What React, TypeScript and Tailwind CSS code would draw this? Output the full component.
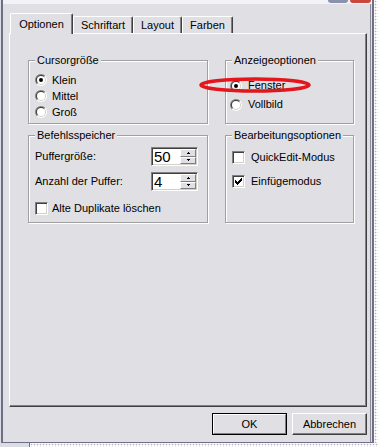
import React from "react";

const checker =
  "bg-white bg-[radial-gradient(circle,#b4b4c0_0.7px,#ffffff_1.1px)] bg-[length:3px_3px]";

function Radio({ checked }: { checked?: boolean }) {
  // classic sunken radio: split diagonally into shadow / highlight halves
  const half = (r: number, sweep: 0 | 1, fill: string) => {
    const d = r * Math.SQRT1_2;
    return (
      <path
        d={`M${6 + d} ${6 - d}A${r} ${r} 0 0 ${sweep} ${6 - d} ${6 + d}Z`}
        fill={fill}
      />
    );
  };
  return (
    <svg width="12" height="12" viewBox="0 0 12 12" className="shrink-0">
      {half(6, 0, "#808080")}
      {half(6, 1, "#ffffff")}
      {half(5, 0, "#404040")}
      {half(5, 1, "#d4d0c8")}
      <circle cx="6" cy="6" r="4" fill="#fff" />
      {checked && <circle cx="6" cy="6" r="2" fill="#000" />}
    </svg>
  );
}

function CheckBox({ checked }: { checked?: boolean }) {
  const ys = [2, 3, 4, 3, 2, 1, 0];
  return (
    <div className="w-[13px] h-[13px] shrink-0 bg-white border border-t-[#808080] border-l-[#808080] border-r-white border-b-white shadow-[inset_1px_1px_0_#404040,inset_-1px_-1px_0_#d4d0c8]">
      {checked && (
        <svg
          width="7"
          height="7"
          viewBox="0 0 7 7"
          shapeRendering="crispEdges"
          className="block ml-[2px] mt-[2px]"
        >
          {ys.map((y, x) => (
            <rect key={x} x={x} y={y} width={1} height={3} fill="#000" />
          ))}
        </svg>
      )}
    </div>
  );
}

function Arrow({ up }: { up?: boolean }) {
  const rows = up
    ? [
        [2, 1],
        [1, 3],
      ]
    : [
        [1, 3],
        [2, 1],
      ];
  return (
    <svg width="5" height="2" viewBox="0 0 5 2" shapeRendering="crispEdges">
      {rows.map(([x, w], y) => (
        <rect key={y} x={x} y={y} width={w} height={1} fill="#000" />
      ))}
    </svg>
  );
}

function SpinBtn({ up }: { up?: boolean }) {
  return (
    <div className="flex-1 flex items-center justify-center bg-[#e0dfe3] border border-t-white border-l-white border-r-[#808080] border-b-[#808080]">
      <Arrow up={up} />
    </div>
  );
}

function Spin({ value }: { value: string }) {
  return (
    <div className="flex w-[47px] h-[19px] p-px bg-white border border-t-[#808080] border-l-[#808080] border-r-white border-b-white shadow-[inset_1px_1px_0_#404040,inset_-1px_-1px_0_#d4d0c8]">
      <span className="flex-1 pl-px text-[15px] leading-[15px]">{value}</span>
      <div className="flex flex-col w-[16px]">
        <SpinBtn up />
        <SpinBtn />
      </div>
    </div>
  );
}

function Group({
  title,
  children,
}: {
  title: string;
  children?: React.ReactNode;
}) {
  return (
    <fieldset className="min-w-0 border border-[#a0a0a0] shadow-[1px_1px_0_#fff,inset_1px_1px_0_#fff]">
      <legend className="ml-[6px] px-[2px] leading-[13px] bg-[#e0dfe3]">
        {title}
      </legend>
      {children}
    </fieldset>
  );
}

function Tab({
  label,
  active,
  w,
}: {
  label: string;
  active?: boolean;
  w: string;
}) {
  return (
    <div
      className={`${w} ${
        active ? "relative z-10 h-[21px] -mb-px" : "h-[17px]"
      } flex items-center justify-center bg-[#e0dfe3] rounded-t-[2px] border-t border-l border-white border-r border-r-[#404040] shadow-[inset_-1px_0_0_#808080]`}
    >
      {label}
    </div>
  );
}

function Button({ label, def }: { label: string; def?: boolean }) {
  if (def) {
    return (
      <div className="w-[75px] h-[22px] border border-black">
        <div className="h-full flex items-center justify-center border border-t-white border-l-white border-r-[#808080] border-b-[#808080]">
          {label}
        </div>
      </div>
    );
  }
  return (
    <div className="w-[75px] h-[22px] flex items-center justify-center border border-t-white border-l-white border-r-[#404040] border-b-[#404040] shadow-[inset_-1px_-1px_0_#808080]">
      {label}
    </div>
  );
}

export default function App() {
  return (
    <div className="relative w-[378px] h-[447px] overflow-hidden flex flex-col bg-white font-['Liberation_Sans',Arial,sans-serif] text-[11px] leading-[13px] text-black">
      <div className="flex h-[443px]">
        <div className="w-px bg-[#dcdce4]" />
        <div className="w-[373px] flex flex-col bg-[#e0dfe3] border-l-2 border-r-2 border-b border-[#6e6e86]">
          {/* bottom edge of the title bar */}
          <div className="h-[4px] flex pr-px bg-[#f3f3f7]">
            <div className="flex-1" />
            <div className="w-[20px] h-[3px] rounded-b-[3px] bg-[#8a90ad]" />
            <div className="w-[21px] h-[3px] ml-[2px] rounded-b-[3px] bg-[#c9473c]" />
          </div>

          <div className="flex-1 flex flex-col mr-px border-r border-[#8c8c98]">
            <div className="flex items-end h-[20px] mt-[9px] pl-[7px]">
              <Tab label="Optionen" active w="w-[63px]" />
              <Tab label="Schriftart" w="w-[60px]" />
              <Tab label="Layout" w="w-[49px]" />
              <Tab label="Farben" w="w-[51px]" />
            </div>

            <div className="ml-[6px] w-[358px] h-[374px] bg-[#e0dfe3] border border-t-white border-l-white border-r-[#404040] border-b-[#404040] shadow-[inset_-1px_-1px_0_#808080]">
              <div className="grid grid-cols-[180px_129px] grid-rows-[70px_94px] gap-x-[17px] gap-y-[5px] pl-[18px] pt-[20px]">
                <Group title="Cursorgröße">
                  <div className="flex flex-col pl-[6px] pt-[5px]">
                    {["Klein", "Mittel", "Groß"].map((t, i) => (
                      <div key={t} className="h-[16px] flex items-center gap-[5px]">
                        <Radio checked={i === 0} />
                        {t}
                      </div>
                    ))}
                  </div>
                </Group>

                <Group title="Anzeigeoptionen">
                  <div className="flex flex-col pl-[4px] pt-[9px]">
                    {["Fenster", "Vollbild"].map((t, i) => (
                      <div key={t} className="h-[19px] flex items-center gap-[6px]">
                        <Radio checked={i === 0} />
                        {t}
                      </div>
                    ))}
                  </div>
                </Group>

                <Group title="Befehlsspeicher">
                  <div className="flex flex-col pl-[6px] pr-[9px] pt-[5px]">
                    <div className="h-[19px] flex items-center justify-between">
                      <span>Puffergröße:</span>
                      <Spin value="50" />
                    </div>
                    <div className="h-[19px] mt-[6px] flex items-center justify-between">
                      <span>Anzahl der Puffer:</span>
                      <Spin value="4" />
                    </div>
                    <div className="h-[13px] mt-[11px] flex items-center gap-[4px]">
                      <CheckBox />
                      Alte Duplikate löschen
                    </div>
                  </div>
                </Group>

                <Group title="Bearbeitungsoptionen">
                  <div className="flex flex-col pl-[6px] pt-[9px]">
                    <div className="h-[13px] flex items-center gap-[6px]">
                      <CheckBox />
                      QuickEdit-Modus
                    </div>
                    <div className="h-[13px] mt-[11px] flex items-center gap-[6px]">
                      <CheckBox checked />
                      Einfügemodus
                    </div>
                  </div>
                </Group>
              </div>
            </div>

            <div className="h-[22px] mt-[6px] pr-[3px] flex justify-end gap-[5px]">
              <Button label="OK" def />
              <Button label="Abbrechen" />
            </div>
          </div>
        </div>
        <div className={`flex-1 ${checker}`} />
      </div>
      <div className="flex-1 flex">
        <div className="w-[30px] bg-[#dcdce4] border-r border-[#6e6e86]" />
        <div className={`flex-1 ${checker}`} />
      </div>

      {/* red marker drawn over the dialog */}
      <svg
        className="absolute left-[197px] top-[75px]"
        width="116"
        height="20"
        viewBox="0 0 116 20"
      >
        <ellipse
          cx="58"
          cy="10"
          rx="54"
          ry="6"
          fill="none"
          stroke="#e3161b"
          strokeWidth="3.5"
        />
      </svg>
    </div>
  );
}
